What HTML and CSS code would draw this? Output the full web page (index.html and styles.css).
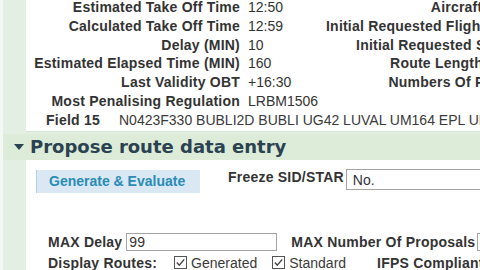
FILE: index.html
```html
<!DOCTYPE html>
<html>
<head>
<meta charset="utf-8">
<link rel="stylesheet" href="styles.css">
</head>
<body>
<div class="page">
  <div class="summary">
    <div class="grid">
      <div class="lbl">Estimated Take Off Time</div><div class="val">12:50</div><div class="lbl">Aircraft Type</div><div class="val">A320</div>
      <div class="lbl">Calculated Take Off Time</div><div class="val">12:59</div><div class="lbl">Initial Requested Flight Level</div><div class="val">330</div>
      <div class="lbl">Delay (MIN)</div><div class="val">10</div><div class="lbl">Initial Requested Speed</div><div class="val">N0423</div>
      <div class="lbl">Estimated Elapsed Time (MIN)</div><div class="val">160</div><div class="lbl">Route Length (NM)</div><div class="val">1052</div>
      <div class="lbl">Last Validity OBT</div><div class="val">+16:30</div><div class="lbl">Numbers Of Points</div><div class="val">24</div>
      <div class="lbl">Most Penalising Regulation</div><div class="val">LRBM1506</div><div class="lbl"></div><div class="val"></div>
    </div>
    <div class="field15">
      <span class="f15-label">Field 15</span>
      <span class="f15-value">N0423F330 BUBLI2D BUBLI UG42 LUVAL UM164 EPL UL603 KEMAD</span>
    </div>
  </div>

  <div class="section-head">
    <span class="tri"></span>
    <h2 class="section-title">Propose route data entry</h2>
  </div>

  <div class="entry">
    <div class="row-top">
      <div class="btn">Generate &amp; Evaluate</div>
      <div class="bold freeze-label">Freeze SID/STAR</div>
      <div class="box freeze-box">No.</div>
    </div>
    <div class="row-max">
      <div class="bold">MAX Delay</div>
      <div class="box delay-box">99</div>
      <div class="bold maxnum">MAX Number Of Proposals</div>
      <div class="box num-box">5</div>
    </div>
    <div class="row-display">
      <div class="bold">Display Routes:</div>
      <svg class="chk chk-first" width="13" height="13" viewBox="0 0 13 13"><rect x="0.5" y="0.5" width="12" height="12" fill="#fff" stroke="#555" stroke-width="1"/><path d="M2.8 6.6 L5.3 9.2 L10.2 3.4" fill="none" stroke="#444" stroke-width="1.4"/></svg>
      <span class="opt">Generated</span>
      <svg class="chk chk-second" width="13" height="13" viewBox="0 0 13 13"><rect x="0.5" y="0.5" width="12" height="12" fill="#fff" stroke="#555" stroke-width="1"/><path d="M2.8 6.6 L5.3 9.2 L10.2 3.4" fill="none" stroke="#444" stroke-width="1.4"/></svg>
      <span class="opt">Standard</span>
      <div class="bold ifps">IFPS Compliant</div>
    </div>
  </div>
</div>
</body>
</html>
```

FILE: styles.css
```css
html, body {
  margin: 0;
  padding: 0;
}
body {
  width: 480px;
  height: 270px;
  overflow: hidden;
  background: #f4f8f4;
  font-family: "Liberation Sans", Arial, sans-serif;
  font-size: 14px;
  color: #333;
}
.page {
  margin-left: 3px;
  background: #e4efe3;
  min-height: 290px;
  width: 600px;
}
.summary {
  margin-left: 23px;
  margin-top: -2px;
  background: #fff;
  border-bottom: 1px solid #d3e5d1;
  padding-bottom: 1px;
}
.grid {
  display: grid;
  grid-template-columns: 214px 70px 193px 100px;
  column-gap: 8px;
  line-height: 18.8px;
  white-space: nowrap;
}
.grid .lbl {
  font-weight: bold;
  letter-spacing: 0.22px;
  text-align: right;
  color: #333;
}
.grid .val {
  color: #333;
}
.field15 {
  display: flex;
  line-height: 18.8px;
  white-space: nowrap;
  padding-left: 20px;
}
.f15-label {
  font-weight: bold;
  letter-spacing: 0.22px;
  width: 73px;
}
.f15-value {
  color: #3a3a3a;
}
.section-head {
  margin-top: 2px;
  height: 26px;
  background: #dcecd9;
  display: flex;
  align-items: center;
  padding-left: 11px;
}
.tri {
  width: 0;
  height: 0;
  border-left: 5px solid transparent;
  border-right: 5px solid transparent;
  border-top: 6px solid #2b4250;
  margin-right: 6px;
}
.section-title {
  margin: 0;
  font-family: "DejaVu Sans", Verdana, sans-serif;
  font-weight: bold;
  font-size: 18px;
  line-height: 26px;
  color: #2b4250;
  white-space: nowrap;
}
.entry {
  margin-left: 23px;
  background: #fff;
  padding: 9px 0 0 10px;
  min-height: 130px;
  white-space: nowrap;
}
.row-top {
  display: flex;
  align-items: flex-start;
}
.btn {
  box-sizing: border-box;
  width: 164px;
  height: 23px;
  margin-top: 1px;
  background: #d9e8f3;
  border-left: 1px solid #b9cfe0;
  color: #2a8bb6;
  font-weight: bold;
  padding-left: 12px;
  line-height: 22px;
}
.bold {
  font-weight: bold;
  letter-spacing: 0.22px;
}
.freeze-label {
  margin-left: 28px;
  line-height: 16px;
}
.box {
  box-sizing: border-box;
  border: 1px solid #a3a3a3;
  background: #fff;
  color: #333;
}
.freeze-box {
  margin-left: 2px;
  width: 200px;
  height: 21px;
  padding-left: 6px;
  line-height: 20px;
}
.row-max {
  display: flex;
  align-items: center;
  margin-top: 40px;
  margin-left: 12px;
}
.delay-box {
  margin-left: 4px;
  width: 151px;
  height: 18px;
  padding-left: 2px;
  line-height: 17px;
}
.maxnum {
  margin-left: 14px;
}
.num-box {
  margin-left: 2px;
  width: 40px;
  height: 18px;
  padding-left: 3px;
  line-height: 17px;
}
.row-display {
  display: flex;
  align-items: center;
  margin-top: 3px;
  margin-left: 12px;
  line-height: 18px;
}
.chk {
  display: block;
  flex: none;
}
.chk-first {
  margin-left: 17px;
}
.chk-second {
  margin-left: 15px;
}
.opt {
  margin-left: 4px;
  color: #3a3a3a;
}
.ifps {
  margin-left: 31px;
}
```
